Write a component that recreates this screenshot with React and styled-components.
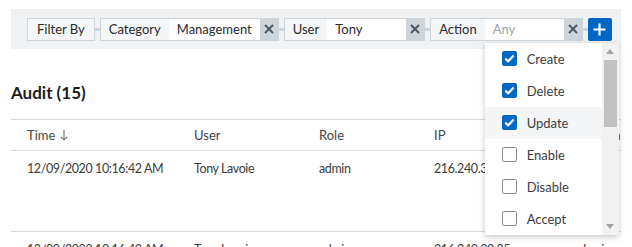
import React from "react";
import styled, { createGlobalStyle } from "styled-components";

const GlobalStyle = createGlobalStyle`
  body {
    margin: 0;
    background: #fff;
    font-family: "Lato", "Noto Sans", sans-serif;
    color: #404040;
  }
`;

const Page = styled.div`
  padding: 9px 11px 0;
`;

const Toolbar = styled.div`
  display: flex;
  align-items: center;
  height: 40px;
  padding: 0 16px;
  background: #eff1f3;

  & > * {
    flex-shrink: 0;
  }
`;

const Connector = styled.span`
  width: 5px;
  height: 3px;
  background: #cdd4da;
`;

const Chip = styled.div`
  display: flex;
  align-items: center;
  height: 23px;
  box-sizing: border-box;
  padding: 0 9px;
  border: 1px solid #cdd4da;
  background: #f3f5f7;
  font-size: 13px;
  white-space: nowrap;
  color: #2b2b2b;
`;

const Group = styled.div`
  display: flex;
  height: 23px;
  box-sizing: border-box;
  border: 1px solid #cdd4da;
  background: #f3f5f7;
`;

const GroupLabel = styled.div`
  display: flex;
  align-items: center;
  padding: 0 8px;
  font-size: 13px;
  white-space: nowrap;
  color: #2b2b2b;
`;

const GroupValue = styled.div`
  position: relative;
  display: flex;
  align-items: center;
  min-width: 79px;
  box-sizing: border-box;
  padding: 0 8px;
  background: #fff;
  font-size: 13px;
  white-space: nowrap;
  color: ${(p) => (p.$placeholder ? "#9aa3ab" : "#2b2b2b")};
`;

const ClearButton = styled.button`
  display: flex;
  align-items: center;
  justify-content: center;
  width: 18px;
  padding: 0;
  border: none;
  background: #cdd4da;
  color: #4b555e;
`;

const AddButton = styled.button`
  display: flex;
  align-items: center;
  justify-content: center;
  width: 24px;
  height: 23px;
  padding: 0;
  border: none;
  border-radius: 2px;
  background: #0067c5;
  color: #fff;
`;

const Heading = styled.h2`
  margin: 34px 0 16px;
  font-size: 17px;
  line-height: 20px;
  font-weight: 700;
  color: #1c1c1c;
`;

const Table = styled.div`
  border-top: 1px solid #d5dbe0;
`;

const Row = styled.div`
  display: grid;
  grid-template-columns: 167px 125px 115px 149px 1fr;
  height: ${(p) => p.$height}px;
  border-bottom: 1px solid #d5dbe0;
  box-sizing: border-box;
  align-items: ${(p) => (p.$header ? "center" : "start")};
`;

const Cell = styled.div`
  display: flex;
  align-items: center;
  gap: 5px;
  padding: ${(p) => (p.$header ? "0" : "9px")} 0 0 16px;
  font-size: ${(p) => (p.$header ? "13px" : "12.5px")};
  line-height: 17px;
  letter-spacing: ${(p) => (p.$header ? "0" : "-0.4px")};
  white-space: nowrap;
  color: ${(p) => (p.$header ? "#454545" : "#3d3d3d")};
`;

const Dropdown = styled.div`
  position: absolute;
  top: 24px;
  left: 0;
  display: flex;
  width: 134px;
  height: 192px;
  background: #fff;
  box-shadow: 0 2px 6px rgba(0, 0, 0, 0.22);
  z-index: 5;
`;

const Options = styled.ul`
  flex: 1;
  margin: 0;
  padding: 0;
  list-style: none;
`;

const Option = styled.li`
  display: flex;
  align-items: center;
  gap: 10px;
  height: 32px;
  padding-left: 17px;
  background: ${(p) => (p.$hover ? "#f4f5f6" : "#fff")};
  font-size: 13px;
  color: #3d3d3d;
`;

const Box = styled.span`
  display: flex;
  align-items: center;
  justify-content: center;
  width: 15px;
  height: 15px;
  box-sizing: border-box;
  border-radius: 2px;
  border: 1px solid ${(p) => (p.$checked ? "#0067c5" : "#8c8c8c")};
  background: ${(p) => (p.$checked ? "#0067c5" : "#fff")};
`;

const Scrollbar = styled.div`
  display: flex;
  flex-direction: column;
  align-items: center;
  width: 17px;
  background: #f1f1f1;
`;

const Arrow = styled.div`
  display: flex;
  align-items: center;
  justify-content: center;
  height: 17px;
  width: 100%;
`;

const Thumb = styled.div`
  width: 13px;
  height: 67px;
  background: #c1c1c1;
`;

const Spacer = styled.div`
  flex: 1;
`;

const XIcon = () => (
  <svg width="10" height="10" viewBox="0 0 10 10">
    <path d="M1 1L9 9M9 1L1 9" stroke="currentColor" strokeWidth="1.8" />
  </svg>
);

const PlusIcon = () => (
  <svg width="13" height="13" viewBox="0 0 13 13">
    <path d="M6.5 0.5V12.5M0.5 6.5H12.5" stroke="currentColor" strokeWidth="2.2" />
  </svg>
);

const Check = () => (
  <svg width="11" height="9" viewBox="0 0 11 9">
    <path d="M1.3 4.6L4.2 7.3L9.7 1.5" fill="none" stroke="#fff" strokeWidth="2.2" />
  </svg>
);

const SortDown = () => (
  <svg width="8" height="11" viewBox="0 0 8 11">
    <path d="M4 0V10M0.8 6.8L4 10L7.2 6.8" fill="none" stroke="#8a8a8a" strokeWidth="1.4" />
  </svg>
);

const Triangle = ({ up }) => (
  <svg width="8" height="5" viewBox="0 0 8 5">
    <path d={up ? "M0 5L4 0L8 5Z" : "M0 0L8 0L4 5Z"} fill="#a3a3a3" />
  </svg>
);

const filters = [
  { label: "Category", value: "Management" },
  { label: "User", value: "Tony" },
];

const options = [
  { name: "Create", checked: true },
  { name: "Delete", checked: true },
  { name: "Update", checked: true, hover: true },
  { name: "Enable" },
  { name: "Disable" },
  { name: "Accept" },
];

const rows = [
  ["12/09/2020 10:16:42 AM", "Tony Lavoie", "admin", "216.240.30.25", "Login"],
  ["12/09/2020 10:16:42 AM", "Tony Lavoie", "admin", "216.240.30.25", "Login"],
];

export default function App() {
  return (
    <Page>
      <GlobalStyle />
      <Toolbar>
        <Chip>Filter By</Chip>
        {filters.map((f) => (
          <React.Fragment key={f.label}>
            <Connector />
            <Group>
              <GroupLabel>{f.label}</GroupLabel>
              <GroupValue>{f.value}</GroupValue>
              <ClearButton>
                <XIcon />
              </ClearButton>
            </Group>
          </React.Fragment>
        ))}
        <Connector />
        <Group>
          <GroupLabel>Action</GroupLabel>
          <GroupValue $placeholder>
            Any
            <Dropdown>
              <Options>
                {options.map((o) => (
                  <Option key={o.name} $hover={o.hover}>
                    <Box $checked={o.checked}>{o.checked && <Check />}</Box>
                    {o.name}
                  </Option>
                ))}
              </Options>
              <Scrollbar>
                <Arrow>
                  <Triangle up />
                </Arrow>
                <Thumb />
                <Spacer />
                <Arrow>
                  <Triangle />
                </Arrow>
              </Scrollbar>
            </Dropdown>
          </GroupValue>
          <ClearButton>
            <XIcon />
          </ClearButton>
        </Group>
        <Connector />
        <AddButton>
          <PlusIcon />
        </AddButton>
      </Toolbar>
      <Heading>Audit (15)</Heading>
      <Table>
        <Row $header $height={31}>
          <Cell $header>
            Time <SortDown />
          </Cell>
          <Cell $header>User</Cell>
          <Cell $header>Role</Cell>
          <Cell $header>IP</Cell>
          <Cell $header>Action</Cell>
        </Row>
        {rows.map((r, i) => (
          <Row key={i} $height={81}>
            {r.map((c, j) => (
              <Cell key={j}>{c}</Cell>
            ))}
          </Row>
        ))}
      </Table>
    </Page>
  );
}
